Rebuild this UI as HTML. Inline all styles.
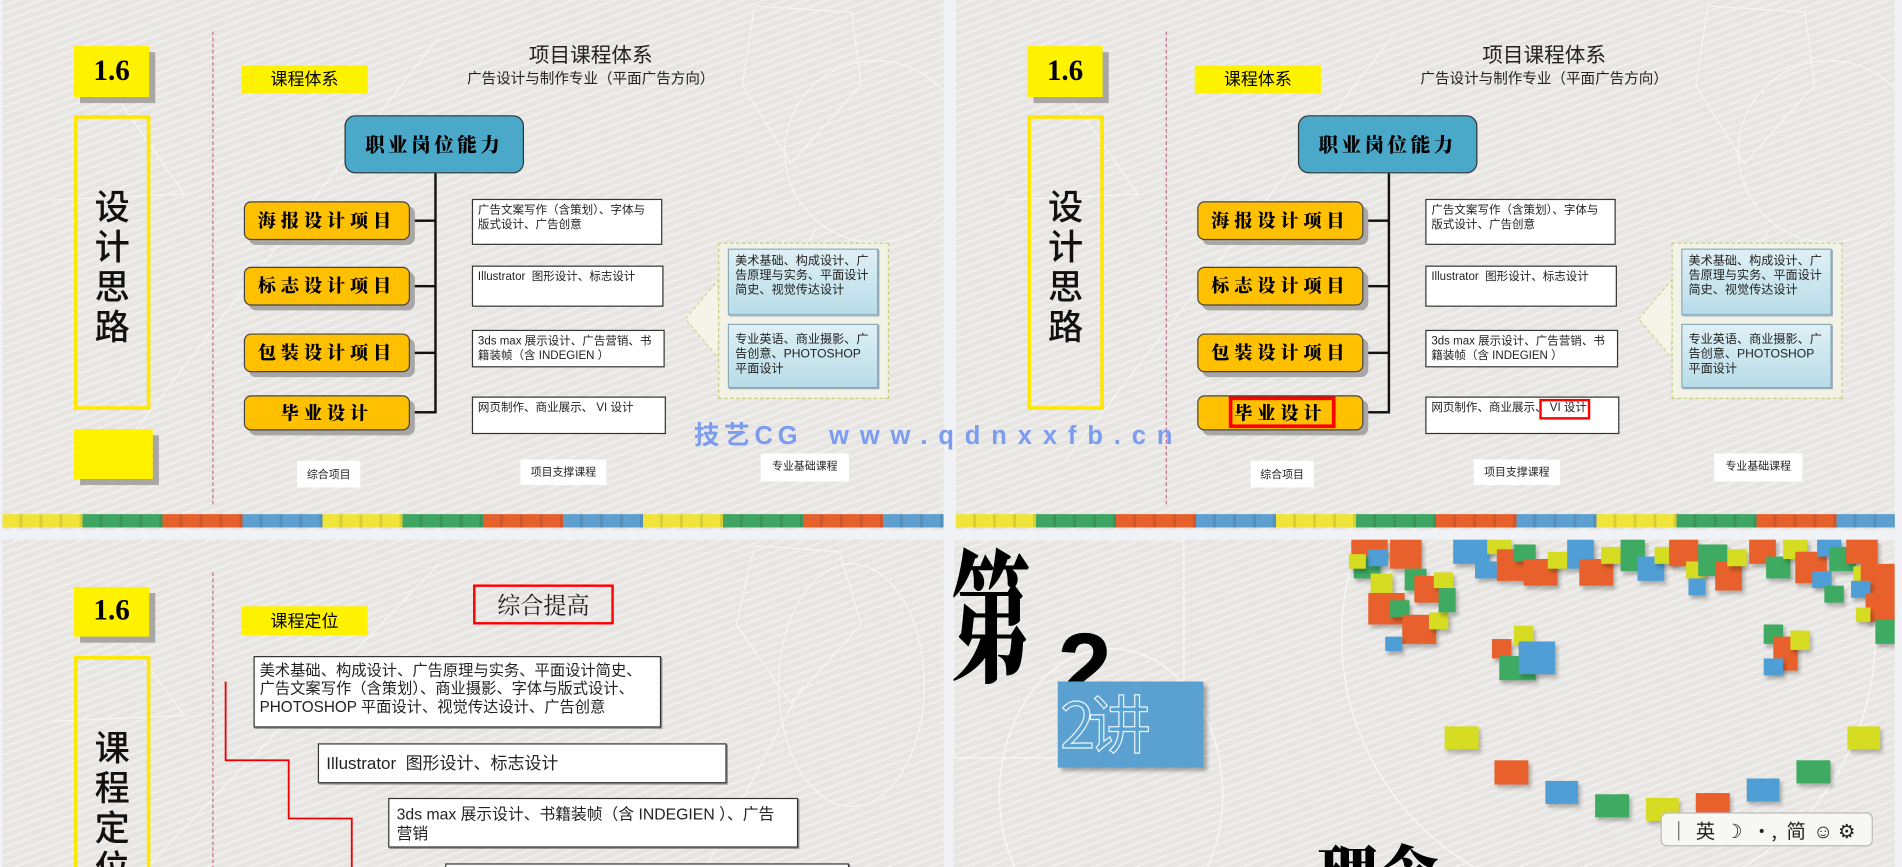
<!DOCTYPE html>
<html><head><meta charset="utf-8">
<style>
*{margin:0;padding:0;box-sizing:border-box}
html,body{width:1902px;height:867px;overflow:hidden;background:#f1f2f5}
#w{position:absolute;left:0;top:0;width:1568px;height:715px;overflow:hidden;transform-origin:0 0;transform:scale(1.21301,1.21259);font-family:"Liberation Sans","Noto Sans CJK SC",sans-serif}
.p{position:absolute;overflow:hidden;background:repeating-linear-gradient(160deg,#e7e5e2 0 4px,#efeeec 4px 6px)}
.a{position:absolute}
.y16{background:#fff200;box-shadow:5px 5px 0 #a9a7a5;font-family:"Liberation Serif",serif;font-weight:bold;font-size:24px;text-align:center}
.vb{border:3px solid #ffe800;font-family:"Noto Sans CJK SC",sans-serif;font-size:29px;line-height:33px;text-align:center;color:#111;font-weight:500}
.dl{border-left:1px dashed #c07090}
.tag{background:#fff200;font-family:"Noto Sans CJK SC",sans-serif;font-size:14px;text-align:center;line-height:23px}
.ob{background:#ffc000;border:1px solid #444;border-radius:6px;box-shadow:4px 4px 0 #a9a7a5;font-family:"Noto Serif CJK SC",serif;font-weight:900;font-size:15px;text-align:center;letter-spacing:4px}
.wb{background:#fff;border:1px solid #333;font-size:9.5px;line-height:12px;padding:3px 4px;color:#222;font-family:"Liberation Sans","Noto Sans CJK SC",sans-serif}
.cb{background:linear-gradient(#dff0f5,#b8dce8);border:1px solid #8ab;box-shadow:1px 1px 0 #9ab;font-size:10px;line-height:12px;padding:4px 5px;color:#222}
.lb{background:#fff;font-size:9px;text-align:center;color:#222}
.bx{position:absolute;background:#fff;border:1px solid #333;color:#222;font-size:12px;line-height:15px;padding:5px 6px;box-shadow:1px 1px 0 #888}
.strip{position:absolute;left:0;top:424px;height:11px;width:776px;background:repeating-linear-gradient(90deg,#f0e43a 0 66px,#3fa564 66px 132px,#e6602c 132px 198px,#5da0d0 198px 264px)}
.strip:after{content:"";position:absolute;inset:0;background:repeating-linear-gradient(90deg,rgba(0,0,0,0) 0 14px,rgba(0,0,0,.1) 14px 16.5px)}
.sq{position:absolute;box-shadow:2px 3px 3px rgba(0,0,0,.25)}
</style></head><body>
<div id="w">

<div class="p" style="left:2px;top:0;width:776px;height:437px">
 <svg class="a" style="left:0;top:0" width="776" height="437"><g fill="none" stroke="#f6f6f5" stroke-width="1"><circle cx="720" cy="125" r="75"/><polyline points="620,5 700,10 708,70 650,135 610,70 620,5"/><polyline points="40,165 150,160 80,60"/><line x1="90" y1="380" x2="360" y2="30"/><line x1="600" y1="330" x2="670" y2="190"/></g></svg>
 <div class="a y16" style="left:59px;top:38px;width:62px;height:42px;line-height:42px">1.6</div>
 <div class="a vb" style="left:59px;top:95px;width:63px;height:243px;padding-top:55px">设<br>计<br>思<br>路</div>
 <div class="a y16" style="left:59px;top:354px;width:65px;height:41px"></div>
 <div class="a dl" style="left:173px;top:26px;height:390px"></div>
 <div class="a tag" style="left:197px;top:54px;width:104px;height:23px">课程体系</div>
 <div class="a" style="left:330px;top:33px;width:310px;text-align:center;font-family:'Noto Sans CJK SC',sans-serif;font-size:17px;color:#222;line-height:22px">项目课程体系</div>
 <div class="a" style="left:330px;top:56px;width:310px;text-align:center;font-family:'Noto Sans CJK SC',sans-serif;font-size:12px;color:#222">广告设计与制作专业（平面广告方向）</div>
 <div class="a" style="left:282px;top:95px;width:148px;height:48px;background:#4aa8c8;border:1px solid #333;border-radius:9px;font-family:'Noto Serif CJK SC',serif;font-weight:900;font-size:16px;line-height:46px;text-align:center;letter-spacing:3px">职业岗位能力</div>
 <div class="a" style="left:356px;top:143px;width:2px;height:198px;background:#111"></div>
 <div class="a" style="left:335px;top:181px;width:22px;height:2px;background:#111"></div>
 <div class="a" style="left:335px;top:235px;width:22px;height:2px;background:#111"></div>
 <div class="a" style="left:335px;top:290px;width:22px;height:2px;background:#111"></div>
 <div class="a" style="left:335px;top:339px;width:22px;height:2px;background:#111"></div>
 <div class="a ob" style="left:199px;top:166px;width:137px;height:32px;line-height:30px">海报设计项目</div>
 <div class="a ob" style="left:199px;top:220px;width:137px;height:32px;line-height:30px">标志设计项目</div>
 <div class="a ob" style="left:199px;top:275px;width:137px;height:32px;line-height:30px">包装设计项目</div>
 <div class="a ob" style="left:199px;top:326px;width:137px;height:29px;line-height:27px">毕业设计</div>
 <div class="a wb" style="left:387px;top:164px;width:157px;height:38px">广告文案写作（含策划）、字体与版式设计、广告创意</div>
 <div class="a wb" style="left:387px;top:219px;width:158px;height:34px">Illustrator &nbsp;图形设计、标志设计</div>
 <div class="a wb" style="left:387px;top:272px;width:159px;height:31px">3ds max 展示设计、广告营销、书籍装帧（含 INDEGIEN ）</div>
 <div class="a wb" style="left:387px;top:327px;width:160px;height:31px">网页制作、商业展示、 VI 设计</div>
 <svg class="a" style="left:560px;top:228px" width="36" height="70"><polygon points="3,35 30,3 30,18 36,18 36,52 30,52 30,67" fill="#f4f5e8" stroke="#c8d890" stroke-dasharray="3,2"/></svg>
 <div class="a" style="left:590px;top:200px;width:141px;height:129px;border:1px dashed #c0d080;background:#f2f3e6"></div>
 <div class="a cb" style="left:598px;top:205px;width:124px;height:55px">美术基础、构成设计、广告原理与实务、平面设计简史、视觉传达设计</div>
 <div class="a cb" style="left:598px;top:267px;width:124px;height:53px;padding-top:7px">专业英语、商业摄影、广告创意、PHOTOSHOP 平面设计</div>
 <div class="a lb" style="left:243px;top:380px;width:52px;height:22px;line-height:22px">综合项目</div>
 <div class="a lb" style="left:427px;top:379px;width:71px;height:21px;line-height:21px">项目支撑课程</div>
 <div class="a lb" style="left:625px;top:374px;width:73px;height:23px;line-height:21px">专业基础课程</div>
 <div class="strip"></div>
</div>

<div class="p" style="left:788px;top:0;width:774px;height:437px">
 <svg class="a" style="left:0;top:0" width="776" height="437"><g fill="none" stroke="#f6f6f5" stroke-width="1"><circle cx="720" cy="125" r="75"/><polyline points="620,5 700,10 708,70 650,135 610,70 620,5"/><polyline points="40,165 150,160 80,60"/><line x1="90" y1="380" x2="360" y2="30"/><line x1="600" y1="330" x2="670" y2="190"/></g></svg>
 <div class="a y16" style="left:59px;top:38px;width:62px;height:42px;line-height:42px">1.6</div>
 <div class="a vb" style="left:59px;top:95px;width:63px;height:243px;padding-top:55px">设<br>计<br>思<br>路</div>
 <div class="a dl" style="left:173px;top:26px;height:390px"></div>
 <div class="a tag" style="left:197px;top:54px;width:104px;height:23px">课程体系</div>
 <div class="a" style="left:330px;top:33px;width:310px;text-align:center;font-family:'Noto Sans CJK SC',sans-serif;font-size:17px;color:#222;line-height:22px">项目课程体系</div>
 <div class="a" style="left:330px;top:56px;width:310px;text-align:center;font-family:'Noto Sans CJK SC',sans-serif;font-size:12px;color:#222">广告设计与制作专业（平面广告方向）</div>
 <div class="a" style="left:282px;top:95px;width:148px;height:48px;background:#4aa8c8;border:1px solid #333;border-radius:9px;font-family:'Noto Serif CJK SC',serif;font-weight:900;font-size:16px;line-height:46px;text-align:center;letter-spacing:3px">职业岗位能力</div>
 <div class="a" style="left:356px;top:143px;width:2px;height:198px;background:#111"></div>
 <div class="a" style="left:335px;top:181px;width:22px;height:2px;background:#111"></div>
 <div class="a" style="left:335px;top:235px;width:22px;height:2px;background:#111"></div>
 <div class="a" style="left:335px;top:290px;width:22px;height:2px;background:#111"></div>
 <div class="a" style="left:335px;top:339px;width:22px;height:2px;background:#111"></div>
 <div class="a ob" style="left:199px;top:166px;width:137px;height:32px;line-height:30px">海报设计项目</div>
 <div class="a ob" style="left:199px;top:220px;width:137px;height:32px;line-height:30px">标志设计项目</div>
 <div class="a ob" style="left:199px;top:275px;width:137px;height:32px;line-height:30px">包装设计项目</div>
 <div class="a ob" style="left:199px;top:326px;width:137px;height:29px;line-height:27px">毕业设计</div>
 <div class="a" style="left:225px;top:327px;width:88px;height:26px;border:3px solid #f00"></div>
 <div class="a wb" style="left:387px;top:164px;width:157px;height:38px">广告文案写作（含策划）、字体与版式设计、广告创意</div>
 <div class="a wb" style="left:387px;top:219px;width:158px;height:34px">Illustrator &nbsp;图形设计、标志设计</div>
 <div class="a wb" style="left:387px;top:272px;width:159px;height:31px">3ds max 展示设计、广告营销、书籍装帧（含 INDEGIEN ）</div>
 <div class="a wb" style="left:387px;top:327px;width:160px;height:31px">网页制作、商业展示、 VI 设计</div>
 <div class="a" style="left:481px;top:329px;width:42px;height:17px;border:2px solid #f00"></div>
 <svg class="a" style="left:560px;top:228px" width="36" height="70"><polygon points="3,35 30,3 30,18 36,18 36,52 30,52 30,67" fill="#f4f5e8" stroke="#c8d890" stroke-dasharray="3,2"/></svg>
 <div class="a" style="left:590px;top:200px;width:141px;height:129px;border:1px dashed #c0d080;background:#f2f3e6"></div>
 <div class="a cb" style="left:598px;top:205px;width:124px;height:55px">美术基础、构成设计、广告原理与实务、平面设计简史、视觉传达设计</div>
 <div class="a cb" style="left:598px;top:267px;width:124px;height:53px;padding-top:7px">专业英语、商业摄影、广告创意、PHOTOSHOP 平面设计</div>
 <div class="a lb" style="left:243px;top:380px;width:52px;height:22px;line-height:22px">综合项目</div>
 <div class="a lb" style="left:427px;top:379px;width:71px;height:21px;line-height:21px">项目支撑课程</div>
 <div class="a lb" style="left:625px;top:374px;width:73px;height:23px;line-height:21px">专业基础课程</div>
 <div class="strip"></div>
</div>

<div class="a" style="left:572px;top:343px;font-family:'Liberation Sans','Noto Sans CJK SC',sans-serif;font-weight:bold;font-size:21px;color:#7c9cf0;white-space:nowrap"><span style="letter-spacing:4px">技艺CG</span><span style="margin-left:22px;letter-spacing:9px">www.qdnxxfb.cn</span></div>

<div class="p" style="left:2px;top:445px;width:776px;height:270px">
 <svg class="a" style="left:0;top:0" width="776" height="270"><g fill="none" stroke="#f6f6f5"><ellipse cx="700" cy="120" rx="60" ry="100"/><polyline points="620,5 690,10 708,70 650,135 605,70 620,5"/><polyline points="40,150 150,145 80,50"/><line x1="90" y1="300" x2="360" y2="20"/><line x1="580" y1="270" x2="660" y2="120"/></g></svg>
 <div class="a y16" style="left:59px;top:39px;width:62px;height:41px;line-height:41px">1.6</div>
 <div class="a vb" style="left:59px;top:96px;width:63px;height:200px;padding-top:55px">课<br>程<br>定<br>位</div>
 <div class="a dl" style="left:173px;top:27px;height:260px"></div>
 <div class="a tag" style="left:197px;top:55px;width:104px;height:24px;line-height:24px">课程定位</div>
 <div class="a" style="left:388px;top:37px;width:116px;height:33px;border:2px solid #f00;font-family:'Noto Serif CJK SC',serif;font-size:19px;line-height:29px;text-align:center;color:#222">综合提高</div>
 <div class="bx" style="left:207px;top:96px;width:336px;height:59px;font-size:12.6px;line-height:15px;padding:4px 4px">美术基础、构成设计、广告原理与实务、平面设计简史、广告文案写作（含策划）、商业摄影、字体与版式设计、PHOTOSHOP 平面设计、视觉传达设计、广告创意</div>
 <div class="bx" style="left:260px;top:168px;width:337px;height:33px;font-size:14px;line-height:21px">Illustrator &nbsp;图形设计、标志设计</div>
 <div class="bx" style="left:318px;top:213px;width:338px;height:41px;font-size:13px;line-height:16px">3ds max 展示设计、书籍装帧（含 INDEGIEN ）、广告营销</div>
 <div class="bx" style="left:365px;top:267px;width:333px;height:30px"></div>
 <svg class="a" style="left:0;top:0" width="776" height="270"><polyline points="184,117 184,182 236,182 236,230 288,230 288,280" fill="none" stroke="#e00" stroke-width="1.5"/></svg>
</div>

<div class="p" style="left:786px;top:445px;width:776px;height:270px">
 <svg class="a" style="left:0;top:0" width="776" height="270"><g fill="none" stroke="#f7f7f6" stroke-width="1.2"><rect x="0" y="0" width="190" height="180"/><ellipse cx="130" cy="210" rx="92" ry="120"/><circle cx="540" cy="80" r="220"/></g></svg>
 <div class="a" style="left:-2px;top:-2px;font-family:'Noto Serif CJK SC',serif;font-weight:900;font-size:66px;line-height:66px;color:#000;transform:scale(1,1.8);transform-origin:0 0">第</div>
 <div class="a" style="left:86px;top:66px;font-family:'Liberation Sans',sans-serif;font-weight:bold;font-size:80px;line-height:80px;color:#000">2</div>
 <div class="a" style="left:86px;top:117px;width:120px;height:71px;background:#5aa0d0;box-shadow:3px 3px 3px rgba(0,0,0,.3)"></div>
 <div class="a" style="left:86px;top:112px;width:120px;height:76px;font-family:'Noto Sans CJK SC',sans-serif;font-size:52px;line-height:76px;color:transparent;-webkit-text-stroke:1px #eaf4fb;letter-spacing:-6px;padding-left:2px">2讲</div>
 <div class="a" style="left:300px;top:248px;font-family:'Noto Serif CJK SC',serif;font-weight:900;font-size:50px;line-height:50px;color:#000">理念</div>

 <div class="sq" style="left:328px;top:0;width:30px;height:14px;background:#e8612c"></div>
 <div class="sq" style="left:330px;top:14px;width:22px;height:18px;background:#3fab62"></div>
 <div class="sq" style="left:342px;top:8px;width:16px;height:14px;background:#4f9fd6"></div>
 <div class="sq" style="left:326px;top:12px;width:14px;height:12px;background:#d6dc22"></div>
 <div class="sq" style="left:344px;top:28px;width:18px;height:16px;background:#d6dc22"></div>
 <div class="sq" style="left:360px;top:0;width:26px;height:24px;background:#e8612c"></div>
 <div class="sq" style="left:372px;top:24px;width:18px;height:18px;background:#3fab62"></div>
 <div class="sq" style="left:380px;top:30px;width:28px;height:22px;background:#e8612c"></div>
 <div class="sq" style="left:396px;top:27px;width:16px;height:13px;background:#d6dc22"></div>
 <div class="sq" style="left:342px;top:44px;width:30px;height:26px;background:#e8612c"></div>
 <div class="sq" style="left:360px;top:50px;width:16px;height:14px;background:#3fab62"></div>
 <div class="sq" style="left:370px;top:62px;width:28px;height:24px;background:#e8612c"></div>
 <div class="sq" style="left:392px;top:60px;width:16px;height:14px;background:#d6dc22"></div>
 <div class="sq" style="left:356px;top:80px;width:14px;height:12px;background:#4f9fd6"></div>
 <div class="sq" style="left:400px;top:40px;width:14px;height:20px;background:#3fab62"></div>
 <div class="sq" style="left:412px;top:0;width:30px;height:20px;background:#4f9fd6"></div>
 <div class="sq" style="left:430px;top:18px;width:18px;height:14px;background:#4f9fd6"></div>
 <div class="sq" style="left:440px;top:0;width:20px;height:12px;background:#d6dc22"></div>
 <div class="sq" style="left:448px;top:8px;width:22px;height:26px;background:#e8612c"></div>
 <div class="sq" style="left:462px;top:4px;width:18px;height:14px;background:#3fab62"></div>
 <div class="sq" style="left:470px;top:16px;width:28px;height:22px;background:#e8612c"></div>
 <div class="sq" style="left:490px;top:10px;width:16px;height:14px;background:#d6dc22"></div>
 <div class="sq" style="left:506px;top:0;width:22px;height:24px;background:#4f9fd6"></div>
 <div class="sq" style="left:516px;top:16px;width:28px;height:22px;background:#e8612c"></div>
 <div class="sq" style="left:534px;top:6px;width:16px;height:14px;background:#d6dc22"></div>
 <div class="sq" style="left:550px;top:0;width:20px;height:26px;background:#3fab62"></div>
 <div class="sq" style="left:564px;top:14px;width:22px;height:20px;background:#4f9fd6"></div>
 <div class="sq" style="left:578px;top:6px;width:20px;height:14px;background:#d6dc22"></div>
 <div class="sq" style="left:590px;top:0;width:24px;height:22px;background:#e8612c"></div>
 <div class="sq" style="left:604px;top:18px;width:16px;height:14px;background:#d6dc22"></div>
 <div class="sq" style="left:614px;top:4px;width:24px;height:26px;background:#3fab62"></div>
 <div class="sq" style="left:628px;top:18px;width:22px;height:24px;background:#e8612c"></div>
 <div class="sq" style="left:638px;top:8px;width:16px;height:14px;background:#d6dc22"></div>
 <div class="sq" style="left:606px;top:32px;width:14px;height:14px;background:#4f9fd6"></div>
 <div class="sq" style="left:656px;top:0;width:22px;height:20px;background:#e8612c"></div>
 <div class="sq" style="left:670px;top:14px;width:20px;height:18px;background:#3fab62"></div>
 <div class="sq" style="left:684px;top:0;width:20px;height:16px;background:#d6dc22"></div>
 <div class="sq" style="left:694px;top:10px;width:26px;height:26px;background:#e8612c"></div>
 <div class="sq" style="left:712px;top:0;width:20px;height:14px;background:#4f9fd6"></div>
 <div class="sq" style="left:722px;top:6px;width:22px;height:20px;background:#3fab62"></div>
 <div class="sq" style="left:736px;top:0;width:26px;height:20px;background:#e8612c"></div>
 <div class="sq" style="left:742px;top:22px;width:16px;height:12px;background:#d6dc22"></div>
 <div class="sq" style="left:748px;top:20px;width:28px;height:24px;background:#e8612c"></div>
 <div class="sq" style="left:740px;top:34px;width:16px;height:14px;background:#4f9fd6"></div>
 <div class="sq" style="left:752px;top:44px;width:24px;height:24px;background:#e8612c"></div>
 <div class="sq" style="left:744px;top:56px;width:12px;height:12px;background:#d6dc22"></div>
 <div class="sq" style="left:760px;top:66px;width:16px;height:20px;background:#3fab62"></div>
 <div class="sq" style="left:708px;top:26px;width:16px;height:14px;background:#4f9fd6"></div>
 <div class="sq" style="left:718px;top:38px;width:16px;height:14px;background:#3fab62"></div>
 <div class="sq" style="left:444px;top:82px;width:16px;height:16px;background:#e8612c"></div>
 <div class="sq" style="left:462px;top:71px;width:16px;height:16px;background:#d6dc22"></div>
 <div class="sq" style="left:450px;top:96px;width:30px;height:20px;background:#3fab62"></div>
 <div class="sq" style="left:466px;top:84px;width:30px;height:27px;background:#4f9fd6"></div>
 <div class="sq" style="left:668px;top:70px;width:16px;height:16px;background:#3fab62"></div>
 <div class="sq" style="left:676px;top:80px;width:20px;height:28px;background:#e8612c"></div>
 <div class="sq" style="left:690px;top:75px;width:16px;height:16px;background:#d6dc22"></div>
 <div class="sq" style="left:668px;top:98px;width:16px;height:14px;background:#4f9fd6"></div>
 <div class="sq" style="left:405px;top:154px;width:28px;height:19px;background:#d6dc22"></div>
 <div class="sq" style="left:446px;top:182px;width:28px;height:20px;background:#e8612c"></div>
 <div class="sq" style="left:488px;top:199px;width:27px;height:19px;background:#4f9fd6"></div>
 <div class="sq" style="left:529px;top:210px;width:28px;height:19px;background:#3fab62"></div>
 <div class="sq" style="left:571px;top:213px;width:27px;height:19px;background:#d6dc22"></div>
 <div class="sq" style="left:612px;top:209px;width:28px;height:19px;background:#e8612c"></div>
 <div class="sq" style="left:654px;top:197px;width:27px;height:19px;background:#4f9fd6"></div>
 <div class="sq" style="left:695px;top:182px;width:28px;height:19px;background:#3fab62"></div>
 <div class="sq" style="left:737px;top:154px;width:27px;height:19px;background:#d6dc22"></div>
</div>

<div class="a" style="left:1369px;top:670px;width:175px;height:28px;background:#f7f7f4;border:1px solid #bbb;border-radius:5px;font-family:'Noto Sans CJK SC',sans-serif;font-size:16px;line-height:26px;color:#222;white-space:nowrap;padding-left:6px">│<span style="margin-left:6px">英</span><span style="margin-left:8px">☽</span><span style="margin-left:8px">•,</span><span style="margin-left:8px">简</span><span style="margin-left:6px">☺</span><span style="margin-left:4px">⚙</span></div>

</div>
</body></html>
